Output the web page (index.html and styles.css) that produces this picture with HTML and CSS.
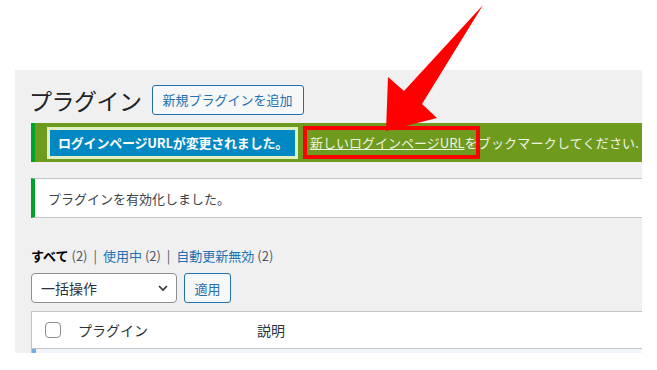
FILE: index.html
```html
<!DOCTYPE html>
<html lang="ja">
<head>
  <meta charset="UTF-8">
  <title>プラグイン</title>
  <link rel="stylesheet" href="styles.css">
</head>
<body>
  <div class="wrap">
    <div class="title-row">
      <h1>プラグイン</h1>
      <a class="page-title-action" href="#">新規プラグインを追加</a>
    </div>

    <div class="notice-login">
      <span class="login-changed">ログインページURLが変更されました。</span>
      <span class="bookmark"><a class="new-url" href="#">新しいログインページURL</a></span><span class="rest">をブックマークしてください.</span>
    </div>

    <div class="notice">
      <p>プラグインを有効化しました。</p>
    </div>

    <ul class="subsubsub">
      <li><b>すべて</b> <span class="count">(2)</span> <span class="sep">|</span></li>
      <li><a href="#">使用中</a> <span class="count">(2)</span> <span class="sep">|</span></li>
      <li><a href="#">自動更新無効</a> <span class="count">(2)</span></li>
    </ul>

    <div class="tablenav">
      <div class="bulk-select">
        <span>一括操作</span>
        <svg width="14" height="14" viewBox="0 0 14 14"><path d="M3 5l4 4 4-4" fill="none" stroke="#2c3338" stroke-width="1.6"/></svg>
      </div>
      <button class="apply">適用</button>
    </div>

    <div class="plugins-table">
      <div class="thead">
        <span class="check"></span>
        <span class="col-name">プラグイン</span>
        <span class="col-desc">説明</span>
      </div>
      <div class="row-active"></div>
    </div>
  </div>

  <svg class="arrow" width="657" height="370" viewBox="0 0 657 370">
    <polygon points="483,5 422,104 437,118 386,131 388,77 404,91" fill="#ff0000"/>
  </svg>
</body>
</html>
```

FILE: styles.css
```css
body {
  margin: 0;
  background: #fff;
  font-family: "Noto Sans CJK JP", "Noto Sans", sans-serif;
  color: #3c434a;
}

.wrap {
  margin: 70px 0 0 15px;
  width: 627px;
  height: 283px;
  background: #f0f0f1;
  overflow: hidden;
  display: flex;
  flex-direction: column;
  padding-left: 16px;
  box-sizing: border-box;
}

.wrap > * {
  flex-shrink: 0;
}

.title-row {
  display: flex;
  align-items: center;
  height: 30px;
  margin-top: 15px;
}

h1 {
  margin: 0 0 0 -2px;
  font-size: 23px;
  font-weight: 400;
  color: #1d2327;
  line-height: 30px;
  letter-spacing: -0.5px;
}

.page-title-action {
  margin-left: 10px;
  height: 30px;
  box-sizing: border-box;
  padding: 0 10px;
  border: 1px solid #2271b1;
  border-radius: 3px;
  background: #f6f7f7;
  color: #2271b1;
  font-size: 13px;
  line-height: 28px;
  text-decoration: none;
}

.notice-login {
  margin-top: 8px;
  height: 39px;
  box-sizing: border-box;
  background: #6e9a1e;
  border-left: 4px solid #00a32a;
  display: flex;
  align-items: center;
  padding-left: 12px;
  white-space: nowrap;
  font-size: 13px;
  color: #f2f4ea;
}

.login-changed {
  background: #0088c2;
  color: #fff;
  font-weight: 700;
  border: 3px solid #e1efc2;
  padding: 0 7px 0 8px;
  line-height: 26px;
  letter-spacing: -0.2px;
}

.bookmark {
  position: relative;
  margin-left: 5px;
  border: 4px solid #ff0000;
  padding: 0 12px 0 3px;
  line-height: 25px;
}

.new-url {
  color: #eef2e2;
  text-decoration: underline;
}

.rest {
  margin-left: -16px;
  letter-spacing: 0.2px;
}

.notice {
  margin-top: 16px;
  height: 40px;
  box-sizing: border-box;
  background: #fff;
  border: 1px solid #c3c4c7;
  border-left: 4px solid #00a32a;
  border-right: none;
  display: flex;
  align-items: center;
  padding-left: 13px;
}

.notice p {
  margin: 0;
  font-size: 13px;
}

.subsubsub {
  list-style: none;
  margin: 28px 0 0;
  padding: 0;
  display: flex;
  font-size: 13px;
  line-height: 20px;
  color: #50575e;
}

.subsubsub li {
  margin-right: 6px;
}

.subsubsub .sep {
  margin-left: 3px;
}

.subsubsub b {
  color: #000;
}

.subsubsub a {
  color: #2271b1;
  text-decoration: none;
}

.tablenav {
  margin-top: 7px;
  display: flex;
  gap: 7px;
  height: 30px;
}

.bulk-select {
  width: 146px;
  box-sizing: border-box;
  border: 1px solid #8c8f94;
  border-radius: 4px;
  background: #fff;
  display: flex;
  align-items: center;
  justify-content: space-between;
  padding: 0 6px 0 9px;
  font-size: 14px;
  color: #2c3338;
}

.apply {
  width: 47px;
  border: 1px solid #2271b1;
  border-radius: 3px;
  background: #f6f7f7;
  color: #2271b1;
  font-family: inherit;
  font-size: 13px;
  padding: 0;
}

.plugins-table {
  margin-top: 8px;
  background: #fff;
  border: 1px solid #c3c4c7;
  border-right: none;
}

.thead {
  height: 36px;
  display: flex;
  align-items: center;
  border-bottom: 1px solid #c3c4c7;
  font-size: 14px;
  color: #2c3338;
}

.check {
  width: 16px;
  height: 16px;
  box-sizing: border-box;
  border: 1px solid #8c8f94;
  border-radius: 4px;
  margin-left: 13px;
}

.col-name {
  margin-left: 17px;
  width: 179px;
}

.row-active {
  height: 10px;
  background: #f0f6fc;
  border-left: 4px solid #72aee6;
}

.arrow {
  position: absolute;
  left: 0;
  top: 0;
  pointer-events: none;
}
```
